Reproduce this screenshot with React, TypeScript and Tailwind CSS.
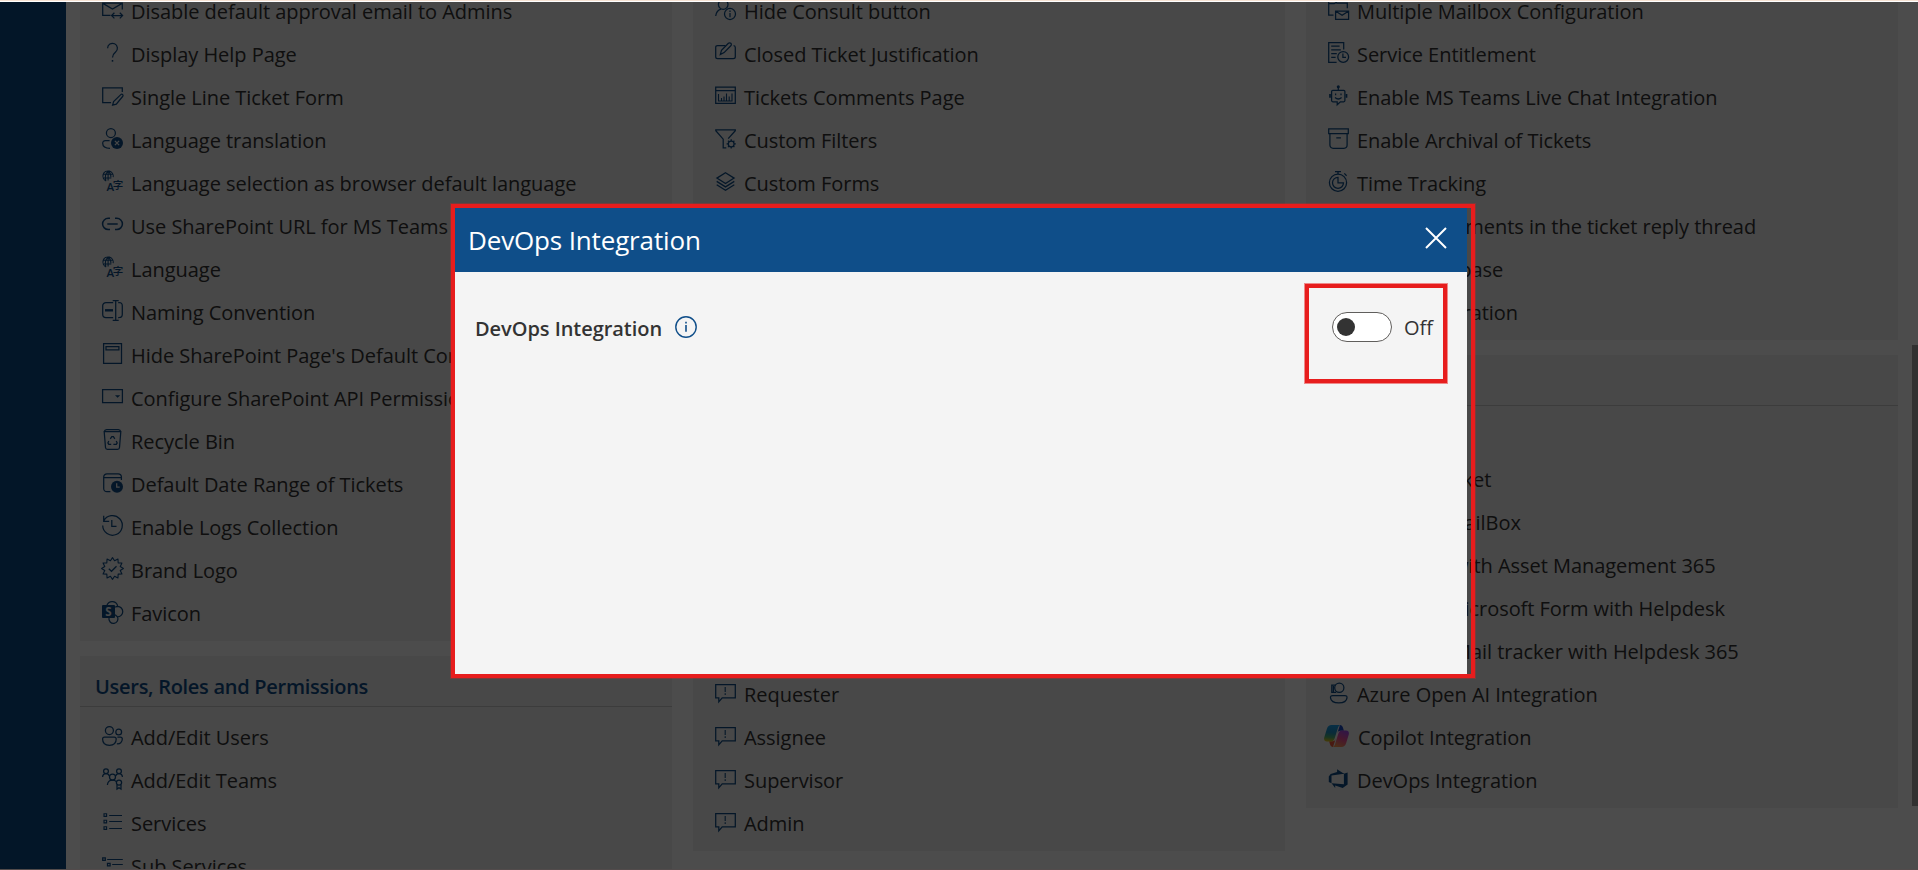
import type { ReactNode } from "react";

function Icon({ children }: { children: ReactNode }) {
  return (
    <svg
      viewBox="0 0 21 21"
      className="mt-[10px] h-[21px] w-[21px] shrink-0 overflow-visible text-[#0f4c86]"
      fill="none"
      stroke="currentColor"
      strokeWidth={1.25}
    >
      {children}
    </svg>
  );
}

const sealPath = (() => {
  const points: string[] = [];
  for (let i = 0; i < 24; i++) {
    const radius = i % 2 === 0 ? 10.9 : 8;
    const angle = (i * Math.PI) / 12;
    points.push(
      `${(10.5 + radius * Math.sin(angle)).toFixed(2)} ${(10.5 - radius * Math.cos(angle)).toFixed(2)}`,
    );
  }
  return `M${points.join("L")}Z`;
})();

const translate = (
  <>
    <path
      d="M4.2 10A5.2 5.2 0 1 1 11.2 6.2M3.9 9.5C2.7 6.5 3.4 2 6.1.5c1.9 1 2.8 3.2 2.8 5.7M6.1.5v9M1.3 3.3h9.6M1 7h8.3"
      strokeWidth={1.1}
    />
    <text x="4.4" y="19.7" fontSize="11.5" fontWeight="600" fill="currentColor" stroke="none" fontFamily="Open Sans, sans-serif">
      A
    </text>
    <text x="10.8" y="18.2" fontSize="10.5" fontWeight="500" fill="currentColor" stroke="none" fontFamily="Noto Sans CJK SC, sans-serif">
      字
    </text>
  </>
);

const comment = (
  <>
    <path d="M.7 2.6h19.6v13.2H7.2l-3.4 4v-4H.7z" />
    <path d="M10.2 5v5M10.2 11.3v1.6" strokeWidth={1.1} />
  </>
);

const icons: Record<string, ReactNode> = {
  mailSync: (
    <>
      <path d="M8.5 16.4H.7V4h19.6v6.6M.9 4.4l9.6 5.6 9.6-5.6" />
      <path d="M9.6 16.6h11M12.4 13.8l-2.8 2.8 2.8 2.8M17.8 13.8l2.8 2.8-2.8 2.8" />
    </>
  ),
  help: (
    <>
      <path d="M5.6 6.2a4.9 4.9 0 1 1 8 3.8c-1.9 1.6-3.1 2.6-3.1 5.4" />
      <path d="M10.5 18v1.7" strokeWidth={1.5} />
    </>
  ),
  formEdit: (
    <>
      <path d="M20.3 7V2.9H.7v14.8h8.4" />
      <path d="M10.6 20.2l1-3.7 7.2-6.9c.7-.6 1.4-.5 1.9 0s.5 1.3-.1 1.9l-6.3 7.6z" />
    </>
  ),
  userX: (
    <>
      <circle cx="8.9" cy="5" r="4.5" />
      <path d="M7.6 12.7H3.4C1.6 12.7.7 13.6.7 15.2c0 3.4 2.9 5 7.3 5.1" />
      <circle cx="15" cy="15" r="6" fill="currentColor" stroke="none" />
      <path d="M12.9 12.9l4.2 4.2M17.1 12.9l-4.2 4.2" stroke="#f0f0f0" strokeWidth={1.3} />
    </>
  ),
  translate,
  link: (
    <path d="M8 4.3H6.2a5.6 5.6 0 0 0 0 11.2H8M13 4.3h1.8a5.6 5.6 0 0 1 0 11.2H13M5.3 9.9h10.4" strokeWidth={1.5} />
  ),
  rename: (
    <>
      <path d="M11.2 2.5H4A3.3 3.3 0 0 0 .7 5.8v8.4A3.3 3.3 0 0 0 4 17.5h7.2M16.2 2.5h.9a3.3 3.3 0 0 1 3.2 3.3v8.4a3.3 3.3 0 0 1-3.2 3.3h-.9" />
      <path d="M10.7.6h6M10.7 20.3h6M13.7.6v19.7" />
      <path d="M3 10.3h8" strokeWidth={2.4} />
    </>
  ),
  page: (
    <>
      <path d="M1.6.6h17.9v19.7H1.6z" />
      <path d="M4 3.5h12.9v3.4H4z" />
    </>
  ),
  dropdown: (
    <>
      <path d="M.6 3.5h19.8v13H.6z" />
      <path d="M13 9.2h5.2l-2.6 2.6z" fill="currentColor" stroke="none" />
    </>
  ),
  recycle: (
    <>
      <path d="M2.2 2.7h16.6L17.5 18.5c-.1 1.2-.8 1.8-1.9 1.8H5.4c-1.1 0-1.8-.6-1.9-1.8zM2.2 2.7C2.5 1.3 3.3.6 4.6.6h11.8c1.3 0 2.1.7 2.4 2.1" />
      <path d="M8.3 9.8l1.5-2.2h1.6l1.4 2.2M6.8 12l-.9 1.9.9 1.5h2.4M14.2 12l1 1.9-.9 1.5h-2.9" />
    </>
  ),
  calendarClock: (
    <>
      <path d="M8.4 19.7H5a3.3 3.3 0 0 1-3.3-3.3V5.1A3.3 3.3 0 0 1 5 1.8h11.1a3.3 3.3 0 0 1 3.3 3.3V8M1.7 5.6h17.7" />
      <circle cx="15" cy="14.8" r="6" fill="currentColor" stroke="none" />
      <path d="M14.7 11.3v3.8h3" stroke="#f0f0f0" />
    </>
  ),
  history: (
    <>
      <path d="M1.7 6.1A9.8 9.8 0 1 1 .7 10.6M1.7.8v5.5h5.5" />
      <path d="M9.8 5v6.3h4.7" />
    </>
  ),
  seal: (
    <>
      <path d={sealPath} strokeLinejoin="round" strokeWidth={1.1} />
      <path d="M6.8 10.7l2.7 2.6 5-5" />
    </>
  ),
  sharepoint: (
    <>
      <path d="M5 4A5.6 5.6 0 0 1 15.7 5.4 5.1 5.1 0 1 1 15.4 15.8 4.5 4.5 0 1 1 7 17M13.2 6.3c.7-.6 1.6-.9 2.5-.9M13 13.8c.8.7 1.6 1.2 2.4 2" />
      <rect x="0" y="4" width="13" height="13" rx="1" fill="currentColor" stroke="none" />
      <text x="6.5" y="14.7" fontSize="11.5" fontWeight="700" textAnchor="middle" fill="#f0f0f0" stroke="none" fontFamily="Open Sans, sans-serif">
        S
      </text>
    </>
  ),
  users: (
    <>
      <circle cx="7.4" cy="5.5" r="4" />
      <circle cx="16.7" cy="7" r="2.9" />
      <path d="M2.5 12.2h9.8c1.2 0 1.9.7 1.9 1.9 0 3.7-2.6 6.2-6.8 6.2S.6 17.8.6 14.1c0-1.2.7-1.9 1.9-1.9zM15.4 12.2h2.9c1.2 0 2 .7 2 1.9 0 3-2.3 5-5.4 4.6" />
    </>
  ),
  teams: (
    <>
      <circle cx="4" cy="3.2" r="2.4" />
      <circle cx="17" cy="3.2" r="2.4" />
      <circle cx="10.5" cy="9" r="3" />
      <circle cx="17" cy="14.6" r="2.6" />
      <path d="M.6 9c0-2 1.4-3.4 3.4-3.4 1.7 0 2.9.9 3.4 2.4M20.4 9c0-2-1.4-3.4-3.4-3.4-1.7 0-2.9.9-3.4 2.4M5.4 17c.2-3.2 2.2-5 5.1-5 1.7 0 3 .6 3.9 1.7M15 17v4l2-1.3 2 1.3v-4" />
    </>
  ),
  list: (
    <>
      <path d="M2 2.8h2.6v2.6H2zM2 9.3h2.6v2.6H2zM2 15.8h2.6v2.6H2z" strokeWidth={1.1} />
      <path d="M7.2 4.5h12.8M7.2 10.5h12.8M7.2 17.5h12.8" strokeWidth={1.1} />
    </>
  ),
  sublist: (
    <>
      <path d="M.7 3.8h2.6v2.6H.7zM5.5 9.3h2.6v2.6H5.5zM5.5 15.8h2.6v2.6H5.5z" />
      <path d="M5.2 5.5h15.6M10.2 10.5h10.6M10.2 17.5h10.6" strokeWidth={1.1} />
    </>
  ),
  userInfo: (
    <>
      <circle cx="8.2" cy="5.5" r="4.8" />
      <path d="M.7 17c.5-3.9 2.4-6.1 5.3-6.9" />
      <circle cx="15" cy="15" r="5.5" />
      <path d="M15 11.6v1.3M15 14.1v4.2" />
    </>
  ),
  compose: (
    <>
      <path d="M10.5 3.6H2.6C1.3 3.6.7 4.2.7 5.5v9.2c0 1.3.6 1.9 1.9 1.9h15.6c1.3 0 2.1-.6 2.1-1.9V5.5c0-1.1-.6-1.9-1.7-1.9" />
      <path d="M5.3 12.6l1.2-4.4L13.4 1.3c.7-.7 1.7-.7 2.4 0s.7 1.7 0 2.4l-6.7 6.9z" />
    </>
  ),
  chart: (
    <>
      <path d="M.7 2h19.6v16.3H.7zM.7 5.7h19.6" />
      <path d="M3.5 9v7h13.5v-7.5M6.5 13v3M9 11.5v4.5M11.5 8.5v7.5M14.2 11.5v4.5" strokeWidth={1.1} />
    </>
  ),
  filter: (
    <>
      <path d="M11.3 19.8H8.2v-8.6L.8 2.7V1.9h19.5v.8l-7.1 7.9" />
      <circle cx="16.2" cy="15.9" r="2.9" />
      <path d="M16.2 11.3v1.7M16.2 18.8v1.7M11.6 15.9h1.7M19.1 15.9h1.7M13 12.7l1.2 1.2M18.2 17.9l1.2 1.2M19.4 12.7l-1.2 1.2M14.2 17.9L13 19.1" />
    </>
  ),
  layers: (
    <path d="M10.5 1.7l8.6 5.4-8.6 5.4-8.6-5.4zM1.7 10.4l8.8 5.5 8.8-5.5M1.7 13.8l8.8 5.5 8.8-5.5" />
  ),
  comment,
  folderMail: (
    <>
      <path d="M5.5 16.2H.7V1.6h6.2l2 2.6h10.4v5M.7 4.7h5.5l2-1.2" />
      <path d="M7.6 12h13v8.3h-13zM7.8 12.3l6.3 4 6.3-4" />
    </>
  ),
  docClock: (
    <>
      <path d="M8.6 20.3H.7V.7h15v6.8M3.2 4h8.4M3.2 7.8h9.6M3.2 11.7h5.6M3.2 15.4h4.4" />
      <circle cx="15.2" cy="14.9" r="5.4" />
      <path d="M14.9 11.6v3.7h3.1" />
    </>
  ),
  robot: (
    <>
      <path d="M10.3 1v4.4M4.8 5.4h10.9a1.2 1.2 0 0 1 1.2 1.2v9a1.2 1.2 0 0 1-1.2 1.2h-3.3l-3.2 3v-3H4.8a1.2 1.2 0 0 1-1.2-1.2v-9a1.2 1.2 0 0 1 1.2-1.2z" />
      <circle cx="10.3" cy="1.8" r=".9" />
      <path d="M2 9v3.8M18.5 9v3.8" strokeWidth={1.7} />
      <path d="M7.6 8.5v1.7M13 8.5v1.7M7 12.6c1.9 1.6 4.7 1.6 6.6 0" />
    </>
  ),
  archive: (
    <path d="M.7.9h19.6v4.6H.7zM1.9 5.5v11.6a3.2 3.2 0 0 0 3.2 3.2h10.8a3.2 3.2 0 0 0 3.2-3.2V5.5M8.3 9.9h4.6" />
  ),
  stopwatch: (
    <>
      <circle cx="10" cy="11.7" r="8.6" />
      <path d="M10 6.3a5.5 5.5 0 1 0 5.5 5.5H10zM7 .7h6M16.3 2.4l2.3 2.3M10 .7v2.4" />
    </>
  ),
  azureAi: (
    <>
      <circle cx="11.3" cy="5.7" r="4.6" />
      <path d="M7.4 3.2H3.8v7.2h4.4M5.4 4v5.8M4.6 13.5h12.3c1.5 0 2.3.8 2.1 2.3-.4 3.3-3.5 5-8.2 5s-7.9-1.7-8.3-5c-.2-1.5.6-2.3 2.1-2.3z" />
    </>
  ),
  devops: (
    <path
      d="M19.6 4.4v12.2l-4.9 3.4-7.5-2.5v2.5L3.6 15.3l12.3 1V5.7zM16 5.8L9.1 1.3v2.8L2.7 6 .8 8.4v5.7l2.7 1.2V7.6z"
      fill="currentColor"
      stroke="none"
    />
  ),
};

function Copilot() {
  return (
    <svg viewBox="0 0 25 22" className="-ml-[4px] mr-px mt-[10px] h-[22px] w-[25px] shrink-0">
      <defs>
        <linearGradient id="cpA" x1="0.4" y1="0" x2="0.3" y2="1">
          <stop offset="0" stopColor="#1a9be8" />
          <stop offset="0.45" stopColor="#1f8fc0" />
          <stop offset="0.75" stopColor="#52b471" />
          <stop offset="1" stopColor="#e8c414" />
        </linearGradient>
        <linearGradient id="cpB" x1="0.7" y1="0" x2="0.3" y2="1">
          <stop offset="0" stopColor="#a44be8" />
          <stop offset="0.5" stopColor="#ee5096" />
          <stop offset="1" stopColor="#ff9a50" />
        </linearGradient>
      </defs>
      <path d="M16 0c1.5 0 2.4 1 2.9 2.5l1 3.2h-3.4c-1.7 0-2.7.8-3.2 2.5z" fill="#1a48c4" />
      <path d="M9 22c-1.5 0-2.4-1-2.9-2.5l-1-3.2h3.4c1.7 0 2.7-.8 3.2-2.5z" fill="#f0593a" />
      <path d="M7.5 0h8.8c-1.3.4-1.9 1.4-2.4 3l-3.3 10.500c-.6 1.900-1.800 2.900-3.700 2.900H3C.7 16.400-.4 14.700.3 12.300L3 3.500C3.800 1.200 5.200 0 7.500 0z" fill="url(#cpA)" />
      <path d="M17.5 22H8.700c1.300-.4 1.900-1.400 2.400-3l3.300-10.500c.6-1.900 1.800-2.900 3.700-2.900H22c2.300 0 3.400 1.700 2.700 4.100L22 18.500c-.8 2.300-2.200 3.500-4.500 3.500z" fill="url(#cpB)" />
    </svg>
  );
}

type Item = [icon: string, label: string];

function Row({ item: [icon, label] }: { item: Item }) {
  return (
    <li className="flex h-[43px] items-start gap-[8px] whitespace-nowrap">
      {icon === "copilot" ? <Copilot /> : <Icon>{icons[icon]}</Icon>}
      <span className="pt-px text-[20px] leading-[43px] tracking-[-0.04px]">{label}</span>
    </li>
  );
}

function Card({ title, items, className = "" }: { title?: string; items: Item[]; className?: string }) {
  return (
    <section className={`bg-[#f0f0f0] ${className}`}>
      {title !== undefined && (
        <h2 className="h-[51px] border-b border-[#c8c8c8] pl-[15px] pt-[6px] text-[20px] font-semibold leading-[50px] tracking-[-0.28px] text-[#0f4c86]">
          {title}
        </h2>
      )}
      <ul className={title !== undefined ? "pb-[7px] pl-[22px] pt-[8px]" : "pb-[7px] pl-[22px]"}>
        {items.map((item, i) => (
          <Row key={i} item={item} />
        ))}
      </ul>
    </section>
  );
}

const general: Item[] = [
  ["mailSync", "Disable default approval email to Admins"],
  ["help", "Display Help Page"],
  ["formEdit", "Single Line Ticket Form"],
  ["userX", "Language translation"],
  ["translate", "Language selection as browser default language"],
  ["link", "Use SharePoint URL for MS Teams"],
  ["translate", "Language"],
  ["rename", "Naming Convention"],
  ["page", "Hide SharePoint Page's Default Controls"],
  ["dropdown", "Configure SharePoint API Permissions"],
  ["recycle", "Recycle Bin"],
  ["calendarClock", "Default Date Range of Tickets"],
  ["history", "Enable Logs Collection"],
  ["seal", "Brand Logo"],
  ["sharepoint", "Favicon"],
];

const people: Item[] = [
  ["users", "Add/Edit Users"],
  ["teams", "Add/Edit Teams"],
  ["list", "Services"],
  ["sublist", "Sub Services"],
];

const tickets: Item[] = [
  ["userInfo", "Hide Consult button"],
  ["compose", "Closed Ticket Justification"],
  ["chart", "Tickets Comments Page"],
  ["filter", "Custom Filters"],
  ["layers", "Custom Forms"],
];

const notifications: Item[] = [
  ["comment", "Requester"],
  ["comment", "Assignee"],
  ["comment", "Supervisor"],
  ["comment", "Admin"],
];

const features: Item[] = [
  ["folderMail", "Multiple Mailbox Configuration"],
  ["docClock", "Service Entitlement"],
  ["robot", "Enable MS Teams Live Chat Integration"],
  ["archive", "Enable Archival of Tickets"],
  ["stopwatch", "Time Tracking"],
  ["comment", "View Attachments in the ticket reply thread"],
  ["page", "Knowledgebase"],
  ["list", "Azure Integration"],
];

const integrations: Item[] = [
  ["page", "Teams"],
  ["comment", "Email to Ticket"],
  ["folderMail", "Integrate MailBox"],
  ["link", "Configure with Asset Management 365"],
  ["formEdit", "Integrate Microsoft Form with Helpdesk"],
  ["mailSync", "Configure Mail tracker with Helpdesk 365"],
  ["azureAi", "Azure Open AI Integration"],
  ["copilot", "Copilot Integration"],
  ["devops", "DevOps Integration"],
];

export default function App() {
  return (
    <div className="relative flex h-[870px] w-[1918px] flex-col overflow-hidden bg-[#fdfdfd] font-['Open_Sans','Noto_Sans',sans-serif] text-[#333333]">
      <div className="h-[2px] shrink-0 border-b border-white bg-[#f7e3d4]" />
      <div className="flex h-[868px] overflow-hidden">
        <aside className="w-[66px] shrink-0 bg-[#0b4b86]" />
        <main className="flex flex-1 gap-[21px] pl-[14px]">
          <div className="-mt-[13px] flex w-[592px] flex-col gap-[15px]">
            <Card items={general} />
            <Card title="Users, Roles and Permissions" items={people} className="shrink-0" />
          </div>
          <div className="-mt-[13px] flex w-[592px] flex-col gap-[15px]">
            <Card items={tickets} className="h-[351px] shrink-0" />
            <Card items={notifications} className="flex h-[496px] shrink-0 flex-col justify-end" />
          </div>
          <div className="-mt-[13px] flex w-[592px] flex-col gap-[15px]">
            <Card items={features} />
            <Card title="Integrations" items={integrations} />
          </div>
        </main>
        <div className="flex w-[6px] shrink-0 flex-col pt-[343px]">
          <div className="h-[461px] bg-[#a3a3a3]" />
        </div>
      </div>

      <div className="absolute inset-x-0 bottom-0 top-[2px] border-b border-[#524b4b] bg-black/70" />

      <div className="absolute left-[455px] top-[208px] flex h-[466px] w-[1012px] flex-col bg-[#f4f4f4]">
        <header className="flex h-[64px] shrink-0 items-center justify-between bg-[#0f4e89] pl-[13px] pr-[20px] text-white">
          <h1 className="text-[26px] leading-[64px] tracking-[-0.15px]">DevOps Integration</h1>
          <svg viewBox="0 0 22 22" className="-mt-[4px] h-[22px] w-[22px]" fill="none" stroke="currentColor" strokeWidth="2">
            <path d="M1 1l20 20M21 1L1 21" />
          </svg>
        </header>
        <div className="flex h-[110px] items-center justify-between pl-[20px] pr-[34px]">
          <div className="flex items-center gap-[13px]">
            <span className="pt-[3px] text-[20px] font-semibold tracking-[-0.05px]">DevOps Integration</span>
            <svg viewBox="0 0 22 22" className="h-[22px] w-[22px] text-[#0f4e89]" fill="none" stroke="currentColor" strokeWidth="1.4">
              <circle cx="11" cy="11" r="10.2" />
              <path d="M11 5.8v1.6M11 9v6.8" strokeWidth="1.6" />
            </svg>
          </div>
          <div className="flex items-center gap-[12px]">
            <div className="flex h-[30px] w-[60px] items-center rounded-full border border-[#605e5c] bg-white pl-[4px]">
              <div className="h-[18px] w-[18px] rounded-full bg-[#333333]" />
            </div>
            <span className="pt-px text-[20px]">Off</span>
          </div>
        </div>
      </div>

      <div className="absolute left-[451px] top-[204px] h-[474px] w-[1024px] border-4 border-[#e71d1d] ring-1 ring-[#e71d1d]/30" />
      <div className="absolute left-[1305px] top-[284px] h-[99px] w-[142px] border-4 border-[#e71d1d] ring-1 ring-[#e71d1d]/50" />
    </div>
  );
}
